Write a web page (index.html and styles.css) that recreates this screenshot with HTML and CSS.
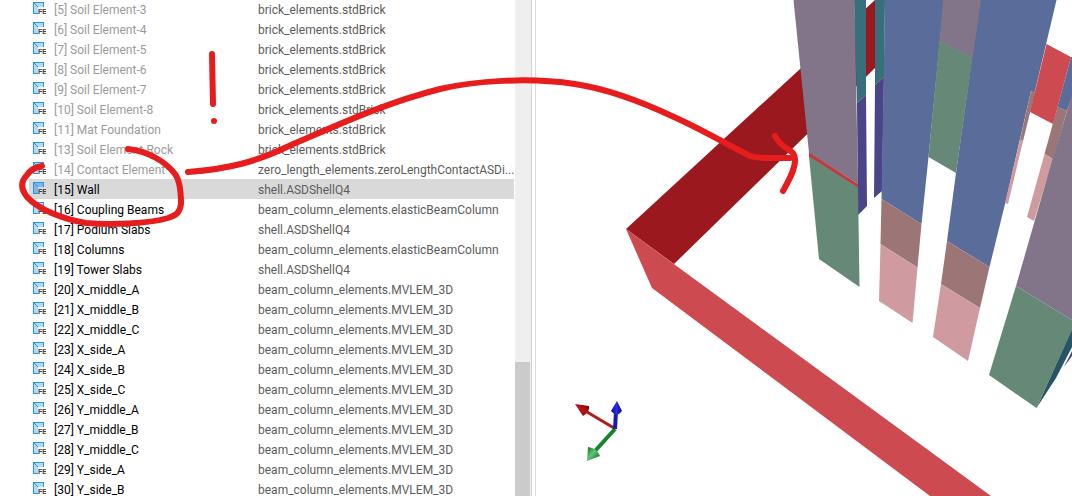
FILE: index.html
```html
<!DOCTYPE html>
<html lang="en">
<head>
<meta charset="utf-8">
<title>Physical properties</title>
<link rel="stylesheet" href="styles.css">
</head>
<body>
<svg class="defs" aria-hidden="true">
  <symbol id="fe" viewBox="0 0 13 13">
    <path class="fe-fill" d="M0 0H11V5H5V12H0Z"/>
    <path class="fe-frame" d="M0 0H11V5H10V1H1V11H5V12H0Z"/>
    <path class="fe-line" d="M1 1L5 5"/>
    <text class="fe-text" x="5" y="12">FE</text>
  </symbol>
</svg>
<main class="app">
  <section class="tree">
    <div class="rows">
    <table class="list">
      <tbody>
        <tr class="off"><td><svg class="icon"><use href="#fe"/></svg>[5] Soil Element-3</td><td>brick_elements.stdBrick</td></tr>
        <tr class="off"><td><svg class="icon"><use href="#fe"/></svg>[6] Soil Element-4</td><td>brick_elements.stdBrick</td></tr>
        <tr class="off"><td><svg class="icon"><use href="#fe"/></svg>[7] Soil Element-5</td><td>brick_elements.stdBrick</td></tr>
        <tr class="off"><td><svg class="icon"><use href="#fe"/></svg>[8] Soil Element-6</td><td>brick_elements.stdBrick</td></tr>
        <tr class="off"><td><svg class="icon"><use href="#fe"/></svg>[9] Soil Element-7</td><td>brick_elements.stdBrick</td></tr>
        <tr class="off"><td><svg class="icon"><use href="#fe"/></svg>[10] Soil Element-8</td><td>brick_elements.stdBrick</td></tr>
        <tr class="off"><td><svg class="icon"><use href="#fe"/></svg>[11] Mat Foundation</td><td>brick_elements.stdBrick</td></tr>
        <tr class="off"><td><svg class="icon"><use href="#fe"/></svg>[13] Soil Element-Rock</td><td>brick_elements.stdBrick</td></tr>
        <tr class="off"><td><svg class="icon"><use href="#fe"/></svg>[14] Contact Element</td><td>zero_length_elements.zeroLengthContactASDi...</td></tr>
        <tr class="selected"><td><svg class="icon"><use href="#fe"/></svg>[15] Wall</td><td>shell.ASDShellQ4</td></tr>
        <tr><td><svg class="icon"><use href="#fe"/></svg>[16] Coupling Beams</td><td>beam_column_elements.elasticBeamColumn</td></tr>
        <tr><td><svg class="icon"><use href="#fe"/></svg>[17] Podium Slabs</td><td>shell.ASDShellQ4</td></tr>
        <tr><td><svg class="icon"><use href="#fe"/></svg>[18] Columns</td><td>beam_column_elements.elasticBeamColumn</td></tr>
        <tr><td><svg class="icon"><use href="#fe"/></svg>[19] Tower Slabs</td><td>shell.ASDShellQ4</td></tr>
        <tr><td><svg class="icon"><use href="#fe"/></svg>[20] X_middle_A</td><td>beam_column_elements.MVLEM_3D</td></tr>
        <tr><td><svg class="icon"><use href="#fe"/></svg>[21] X_middle_B</td><td>beam_column_elements.MVLEM_3D</td></tr>
        <tr><td><svg class="icon"><use href="#fe"/></svg>[22] X_middle_C</td><td>beam_column_elements.MVLEM_3D</td></tr>
        <tr><td><svg class="icon"><use href="#fe"/></svg>[23] X_side_A</td><td>beam_column_elements.MVLEM_3D</td></tr>
        <tr><td><svg class="icon"><use href="#fe"/></svg>[24] X_side_B</td><td>beam_column_elements.MVLEM_3D</td></tr>
        <tr><td><svg class="icon"><use href="#fe"/></svg>[25] X_side_C</td><td>beam_column_elements.MVLEM_3D</td></tr>
        <tr><td><svg class="icon"><use href="#fe"/></svg>[26] Y_middle_A</td><td>beam_column_elements.MVLEM_3D</td></tr>
        <tr><td><svg class="icon"><use href="#fe"/></svg>[27] Y_middle_B</td><td>beam_column_elements.MVLEM_3D</td></tr>
        <tr><td><svg class="icon"><use href="#fe"/></svg>[28] Y_middle_C</td><td>beam_column_elements.MVLEM_3D</td></tr>
        <tr><td><svg class="icon"><use href="#fe"/></svg>[29] Y_side_A</td><td>beam_column_elements.MVLEM_3D</td></tr>
        <tr><td><svg class="icon"><use href="#fe"/></svg>[30] Y_side_B</td><td>beam_column_elements.MVLEM_3D</td></tr>
      </tbody>
    </table>
    </div>
    <div class="scrollbar"><div class="thumb"></div></div>
  </section>
  <section class="view">
    <svg class="scene" viewBox="536 0 536 496" preserveAspectRatio="xMinYMin slice" role="img" aria-label="3D model view">
      <defs>
        <linearGradient id="gr" x1="0" y1="1" x2="1" y2="0"><stop offset="0" stop-color="#4a0505"/><stop offset=".5" stop-color="#c01414"/><stop offset="1" stop-color="#5a0808"/></linearGradient>
        <linearGradient id="gg" x1="0" y1="0" x2="1" y2="1"><stop offset="0" stop-color="#0a6a1c"/><stop offset=".45" stop-color="#5cc878"/><stop offset="1" stop-color="#06500f"/></linearGradient>
        <linearGradient id="gb"><stop offset="0" stop-color="#0a0a90"/><stop offset=".5" stop-color="#2a2af0"/><stop offset="1" stop-color="#08086a"/></linearGradient>
      </defs>
      <!-- base slab -->
      <path fill="#9b181f" d="M626 229L875 0V68L674 264Z"/>
      <path fill="#cd4a50" d="M626 229L991 496H930L652 288Z"/>
      <!-- first wall -->
      <path fill="#37707a" d="M854 0H866L866 95L857 103ZM875 0H885L884 77L875 85Z"/>
      <path fill="#4a4587" d="M857 103L866 95L867 206L858 215ZM875 85L884 77L882 191L874 198Z"/>
      <path fill="#82758a" d="M793.500 0H854.500L858 184L809 153Z"/>
      <path fill="#c23a40" d="M809 152.500L858 184V188L809 157Z"/>
      <path fill="#658877" d="M809 156.500L858 187.500L859.500 287L819 259Z"/>
      <!-- inner walls -->
      <path fill="#5a6c99" d="M885 0H944L928.500 157L921.500 224L881.500 199Z"/>
      <path fill="#9c7577" d="M881.500 199L921.500 224L917.500 267.500L880.500 244Z"/>
      <path fill="#cf9ba0" d="M880.500 244L917.500 267.500L912.500 323L879 301Z"/>
      <path fill="#5a6c99" d="M980 0H1056.500L1034.500 93L1031 91L1006 200L989.500 267L947 241L956 173Z"/>
      <path fill="#82758a" d="M943 0H981L972.500 58.500L939.500 41.500Z"/>
      <path fill="#658877" d="M939.500 41L972.500 58L956 173L928.500 157Z"/>
      <path fill="#9c7577" d="M947 241L989.500 267L980 308L941 284Z"/>
      <path fill="#cf9ba0" d="M941 284L980 308L968 361L933 337Z"/>
      <path fill="#9c7577" d="M1031 91L1035 93L1023 141L1020 140ZM1057.500 107L1067 111L1053 159L1044.500 154Z"/>
      <path fill="#cf9ba0" d="M1020 140L1023 141L1008 204L1005 203ZM1044.500 154L1053 159L1034 221L1027 217Z"/>
      <path fill="#5a6c99" d="M1071 57H1072V97L1067 111L1057.500 107Z"/>
      <path fill="#cd4a50" d="M1046.500 44L1071 57L1053 124L1030 112Z"/>
      <!-- nearest wall -->
      <path fill="#82758a" d="M1072 95L1052.500 159L1016 286L1072 320Z"/>
      <path fill="#275466" d="M1072 329V347L1056 378L1036.500 408Z"/>
      <path fill="#658877" d="M1016 286L1072 320V330L1036.500 408L989 375Z"/>
      <path fill="#4a4587" d="M1072 351V356L1064 367Z"/>
      <!-- axis triad -->
      <path stroke="#b01c1c" stroke-width="3" d="M587 412L614 428"/>
      <path fill="url(#gr)" d="M575 404L589 406Q590 412 583 416Z"/>
      <path stroke="#14852a" stroke-width="4" d="M615 429L595 451"/>
      <path fill="url(#gg)" d="M587 461L588 447Q597 448 600 456Z"/>
      <path stroke="#1818b8" stroke-width="4" d="M615 429L616 412"/>
      <path fill="url(#gb)" d="M617 401L622 411Q617 418 611 411Z"/>
    </svg>
  </section>
  <svg class="notes" aria-hidden="true">
    <path d="M212 54L213 104M214 121V121.100"/>
    <path d="M128 149C148 151 166 162 175 174C181 182 181 197 181 204C180 212 177 215 168 218C148 224 110 225 86 223C62 219 38 209 27 197C20 188 21 181 27 175C31 169 36 167 42 166"/>
    <path d="M188 172C230 169 258 161 289 146C340 124 385 103 440 89C474 81 527 77 575 84C608 89 640 101 674 117C703 130 728 145 750 156Q756 158 765 158H790"/>
    <path d="M775 136C780 146 788 149 793 153C800 162 788 182 783 191"/>
  </svg>
</main>
</body>
</html>
```
FILE: styles.css
```css
body {
  margin: 0;
  background: #fff;
  font: 12px/18px Roboto, "Open Sans", sans-serif;
  color: #000;
}
.defs {
  position: absolute;
  width: 0;
  height: 0;
}
.app {
  position: relative;
  display: flex;
  height: 100vh;
  overflow: hidden;
}
.tree {
  display: flex;
  flex: none;
  gap: 1px;
  width: 50%;
  padding-left: 29px;
  padding-right: 3px;
  box-sizing: border-box;
  border-right: 1px solid #d9d9d9;
}
.rows {
  flex: 1;
  min-width: 0;
}
.list {
  width: 100%;
  margin-top: -1px;
  border-collapse: collapse;
  table-layout: fixed;
}
.list td {
  height: 18px;
  padding: 2px 0 0 4px;
  white-space: nowrap;
}
.list td:first-child {
  width: 221px;
}
.list td:last-child {
  color: #5c5c5c;
}
.list .off td:first-child {
  color: #9b9b9b;
}
.selected {
  background: #d9d9d9;
}
.icon {
  --fill: #b3dafb;
  width: 13px;
  height: 13px;
  margin-right: 8px;
  vertical-align: -1px;
}
.selected .icon {
  --fill: #7fb6e6;
}
.fe-fill {
  fill: var(--fill);
}
.fe-frame {
  fill: #2196f3;
}
.fe-line {
  stroke: #2196f3;
}
.fe-text {
  font: bold 7px "Liberation Sans", sans-serif;
  fill: #424242;
}
.scrollbar {
  display: flex;
  flex: none;
  align-items: flex-end;
  width: 16px;
  background: #efefef;
  border-right: 1px solid #d4d4d4;
}
.thumb {
  width: 15px;
  height: 27%;
  background: #cbcbcb;
}
.view {
  flex: 1;
  min-width: 0;
}
.scene {
  display: block;
  width: 100%;
  height: 100%;
}
.notes {
  position: absolute;
  inset: 0;
  width: 100%;
  height: 100%;
  fill: none;
  stroke: #e71c1c;
  stroke-width: 6px;
  stroke-linecap: round;
  stroke-linejoin: round;
  pointer-events: none;
}
```
